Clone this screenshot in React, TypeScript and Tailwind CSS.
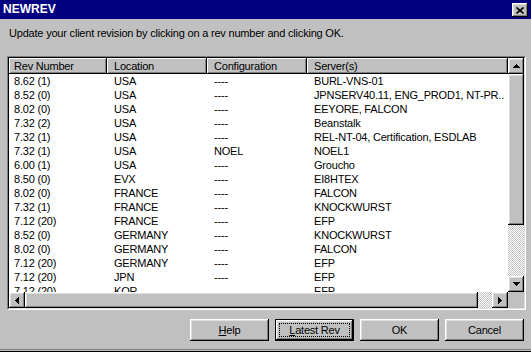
import React from 'react';

interface RevRow {
  rev: string;
  location: string;
  config: string;
  servers: string;
}

const rows: RevRow[] = [
  { rev: '8.62 (1)', location: 'USA', config: '----', servers: 'BURL-VNS-01' },
  { rev: '8.52 (0)', location: 'USA', config: '----', servers: 'JPNSERV40.11, ENG_PROD1, NT-PR..' },
  { rev: '8.02 (0)', location: 'USA', config: '----', servers: 'EEYORE, FALCON' },
  { rev: '7.32 (2)', location: 'USA', config: '----', servers: 'Beanstalk' },
  { rev: '7.32 (1)', location: 'USA', config: '----', servers: 'REL-NT-04, Certification, ESDLAB' },
  { rev: '7.32 (1)', location: 'USA', config: 'NOEL', servers: 'NOEL1' },
  { rev: '6.00 (1)', location: 'USA', config: '----', servers: 'Groucho' },
  { rev: '8.50 (0)', location: 'EVX', config: '----', servers: 'EI8HTEX' },
  { rev: '8.02 (0)', location: 'FRANCE', config: '----', servers: 'FALCON' },
  { rev: '7.32 (1)', location: 'FRANCE', config: '----', servers: 'KNOCKWURST' },
  { rev: '7.12 (20)', location: 'FRANCE', config: '----', servers: 'EFP' },
  { rev: '8.52 (0)', location: 'GERMANY', config: '----', servers: 'KNOCKWURST' },
  { rev: '8.02 (0)', location: 'GERMANY', config: '----', servers: 'FALCON' },
  { rev: '7.12 (20)', location: 'GERMANY', config: '----', servers: 'EFP' },
  { rev: '7.12 (20)', location: 'JPN', config: '----', servers: 'EFP' },
  { rev: '7.12 (20)', location: 'KOR', config: '----', servers: 'EFP' },
];

// classic 3d edges
const raised =
  'shadow-[inset_-1px_-1px_#000,inset_1px_1px_#fff,inset_-2px_-2px_#808080,inset_2px_2px_#dfdfdf]';
const headerEdge = 'shadow-[inset_-1px_-1px_#000,inset_1px_1px_#fff,inset_-2px_-2px_#808080]';
const dither =
  'bg-[repeating-conic-gradient(#c0c0c0_0%_25%,#ffffff_0%_50%)] bg-[length:2px_2px]';

function Arrow({ dir }: { dir: 'up' | 'down' | 'left' | 'right' }) {
  const widths = [1, 3, 5, 7];
  if (dir === 'up' || dir === 'down') {
    const list = dir === 'up' ? widths : [...widths].reverse();
    return (
      <svg width="7" height="4" shapeRendering="crispEdges">
        {list.map((w, i) => (
          <rect key={i} x={(7 - w) / 2} y={i} width={w} height={1} fill="#000" />
        ))}
      </svg>
    );
  }
  const list = dir === 'left' ? widths : [...widths].reverse();
  return (
    <svg width="4" height="7" shapeRendering="crispEdges">
      {list.map((h, i) => (
        <rect key={i} x={i} y={(7 - h) / 2} width={1} height={h} fill="#000" />
      ))}
    </svg>
  );
}

function ScrollButton({ dir }: { dir: 'up' | 'down' | 'left' | 'right' }) {
  return (
    <div className={`w-[16px] h-[16px] shrink-0 bg-[#c0c0c0] flex items-center justify-center ${raised}`}>
      <Arrow dir={dir} />
    </div>
  );
}

function DialogButton({ children, isDefault }: { children: React.ReactNode; isDefault?: boolean }) {
  if (isDefault) {
    return (
      <div className="w-[79px] h-[22px] border border-black">
        <div className={`w-full h-full bg-[#c0c0c0] flex items-center justify-center p-[3px] ${raised}`}>
          <div className="w-full h-full border border-dotted border-black flex items-center justify-center">
            {children}
          </div>
        </div>
      </div>
    );
  }
  return (
    <div className={`w-[79px] h-[22px] bg-[#c0c0c0] flex items-center justify-center ${raised}`}>
      {children}
    </div>
  );
}

export default function App() {
  return (
    <div className="w-[531px] h-[352px] bg-[#c0c0c0] flex flex-col font-['Liberation_Sans',Arial,sans-serif] text-[11px] tracking-[-0.2px] text-black overflow-hidden">
      {/* Title bar */}
      <div className="h-[19px] bg-[#000080] flex items-start justify-between shrink-0">
        <span className="pl-[3px] pt-[2px] text-white font-bold text-[12px] leading-[15px] tracking-normal">NEWREV</span>
        <div className={`mt-[3px] mr-[3px] w-[16px] h-[14px] bg-[#c0c0c0] flex items-center justify-center ${raised}`}>
          <svg width="8" height="7" viewBox="0 0 8 7">
            <path d="M0.5 0.5 L7.5 6.5 M7.5 0.5 L0.5 6.5" stroke="#000" strokeWidth="1.6" />
          </svg>
        </div>
      </div>

      <p className="mt-[8px] pl-[9px] leading-[13px]">
        Update your client revision by clicking on a rev number and clicking OK.
      </p>

      {/* List view */}
      <div className="mt-[16px] ml-[7px] w-[519px] h-[254px] border border-t-[#808080] border-l-[#808080] border-r-white border-b-white shrink-0">
        <div className="w-full h-full border border-t-black border-l-black border-r-[#dfdfdf] border-b-[#dfdfdf] flex flex-col">
          <div className="flex h-[234px]">
            <div className="w-[499px] flex flex-col bg-white overflow-hidden">
              <div className="flex h-[16px] shrink-0 bg-[#c0c0c0] leading-[16px]">
                <div className={`w-[98px] pl-[5px] ${headerEdge}`}>Rev Number</div>
                <div className={`w-[100px] pl-[7px] ${headerEdge}`}>Location</div>
                <div className={`w-[100px] pl-[7px] ${headerEdge}`}>Configuration</div>
                <div className={`flex-1 pl-[7px] ${headerEdge}`}>Server(s)</div>
              </div>
              {rows.map((row, i) => (
                <div key={i} className="flex h-[14px] shrink-0 leading-[14px] whitespace-nowrap">
                  <div className="w-[100px] pl-[5px]">{row.rev}</div>
                  <div className="w-[100px] pl-[5px]">{row.location}</div>
                  <div className="w-[100px] pl-[5px]">{row.config}</div>
                  <div className="flex-1 pl-[5px] overflow-hidden">{row.servers}</div>
                </div>
              ))}
            </div>
            {/* vertical scrollbar */}
            <div className="w-[16px] flex flex-col">
              <ScrollButton dir="up" />
              <div className={`h-[151px] bg-[#c0c0c0] ${raised}`} />
              <div className={`flex-1 ${dither}`} />
              <ScrollButton dir="down" />
            </div>
          </div>
          {/* horizontal scrollbar */}
          <div className="flex h-[16px]">
            <ScrollButton dir="left" />
            <div className={`w-[453px] bg-[#c0c0c0] ${raised}`} />
            <div className={`w-[14px] ${dither}`} />
            <ScrollButton dir="right" />
            <div className="w-[16px] bg-[#c0c0c0]" />
          </div>
        </div>
      </div>

      {/* Buttons */}
      <div className="mt-[9px] pr-[7px] flex justify-end gap-[6px] shrink-0">
        <DialogButton>
          <span><span className="underline">H</span>elp</span>
        </DialogButton>
        <DialogButton isDefault>
          <span><span className="underline">L</span>atest Rev</span>
        </DialogButton>
        <DialogButton>OK</DialogButton>
        <DialogButton>Cancel</DialogButton>
      </div>

      <div className="flex-1" />
      <div className="h-[1px] bg-[#808080] mb-[1px]" />
      <div className="h-[1px] bg-black" />
    </div>
  );
}
